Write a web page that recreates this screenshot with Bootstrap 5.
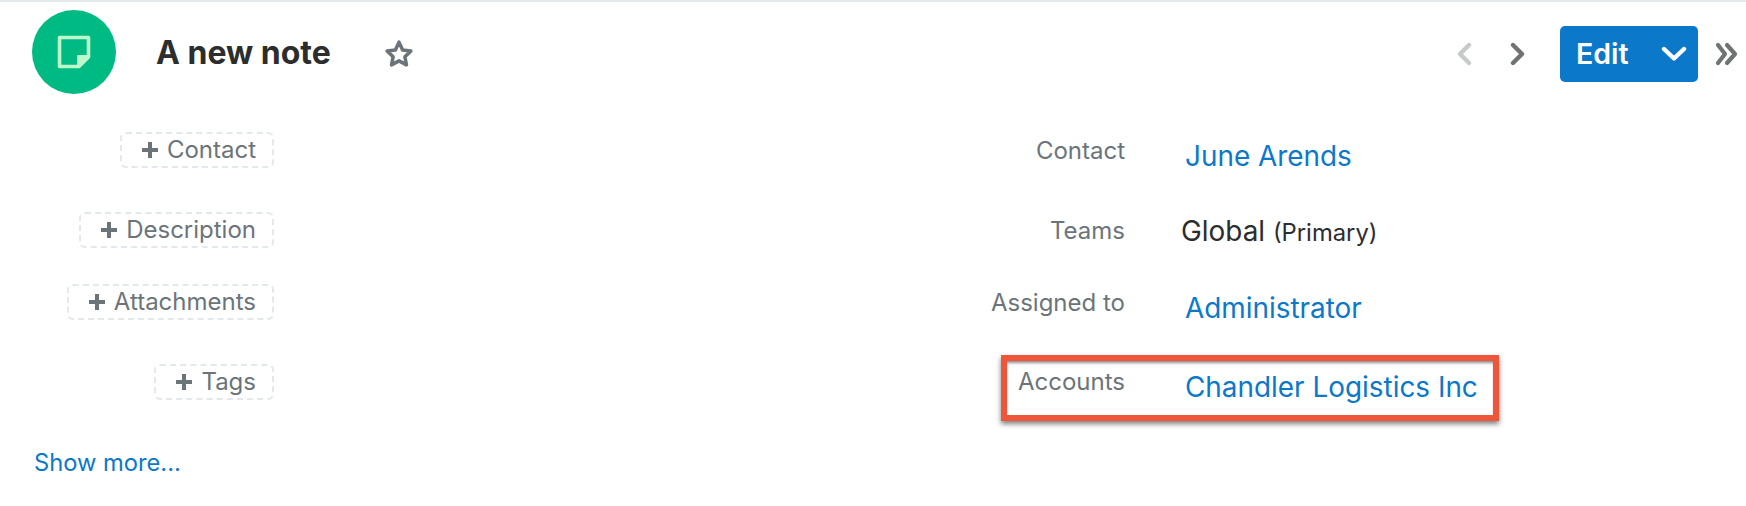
<!DOCTYPE html>
<html lang="en">
<head>
<meta charset="utf-8">
<title>A new note</title>
<link rel="stylesheet" href="https://cdn.jsdelivr.net/npm/bootstrap@5.3.0/dist/css/bootstrap.min.css">
<style>
html,body{height:100%;}
body{font-family:Inter,"Liberation Sans",sans-serif;background:#fff;color:#2b2d2e;overflow:hidden;}
.top-rule{height:2px;background:#e5e9ec;}
.rec-head{height:102px;padding-left:32px;padding-right:8px;}
.rec-icon{width:84px;height:84px;background:#00ba83;margin-top:8px;}
.rec-titlebar{margin-top:34px;}
.rec-title{font-size:32px;font-weight:700;line-height:34px;margin:0 0 0 40px;color:#2b2d2e;}
.star-ic{margin-left:53px;}
.head-actions{padding-top:24px;}
.pager{gap:38px;margin-right:34px;}
.edit-group{width:138px;height:56px;background:#0c78c9;border-radius:5px;color:#fff;font-size:28.5px;font-weight:600;padding:0 11px 0 16px;margin-right:17px;border:0;}
.edit-group:hover{background:#0c78c9;color:#fff;}
.rec-body{position:relative;}
.add-col{width:274px;}
.add-pill{height:36px;border:2px dashed #e3e8ec;border-radius:6px;background:#fff;color:#6b7479;font-size:24px;line-height:1;padding:0 16px 0 20px;gap:9px;}
.pill-a{margin-top:28px;}
.pill-b{margin-top:44px;}
.pill-c{margin-top:36px;}
.more-link{color:#0c78c9;text-decoration:none;font-size:23.7px;line-height:28px;margin:49px 0 0 34px;display:block;}
.fields{margin-left:581px;padding-top:33px;}
.field-row{display:flex;position:relative;}
.field-label{width:270px;text-align:right;color:#6b7479;font-size:24px;line-height:28px;}
.field-value{margin-left:60px;font-size:27.9px;line-height:32px;padding-top:3px;white-space:nowrap;}
.field-value a{color:#0c78c9;text-decoration:none;}
.row-h1{height:80px;}
.row-h2{height:72px;}
.row-h3{height:79px;}
.row-h4{height:64px;}
.plain-val{margin-left:56px;padding-top:0;line-height:28px;}
.minor{font-size:23.8px;}
.callout{position:absolute;left:146px;top:-13px;width:498px;height:66px;border:6px solid #ee5539;box-shadow:0 3px 5px rgba(0,0,0,.5),inset 0 3px 3px -1px rgba(0,0,0,.45);pointer-events:none;}
</style>
</head>
<body>
<div class="top-rule"></div>
<header class="rec-head d-flex align-items-start">
  <div class="rec-icon rounded-circle d-flex align-items-center justify-content-center flex-shrink-0">
    <svg width="34" height="34" viewBox="0 0 34 34" aria-hidden="true"><path d="M2.5 2.5H31.5V22L22 31.5H2.5Z" fill="none" stroke="#bdf8cd" stroke-width="3.6" stroke-linejoin="round"/><path d="M21 31V21H31Z" fill="#bdf8cd" stroke="#bdf8cd" stroke-width="2" stroke-linejoin="round"/></svg>
  </div>
  <div class="d-flex align-items-center rec-titlebar">
    <h1 class="rec-title">A new note</h1>
    <svg class="star-ic" width="30" height="29" viewBox="0 0 29 28" aria-hidden="true"><path d="M14.5 3L18 10.6L26 11.6L20.2 17.2L21.7 25L14.5 21.1L7.3 25L8.8 17.2L3 11.6L11 10.6Z" fill="none" stroke="#6b7479" stroke-width="3.4" stroke-linejoin="round"/></svg>
  </div>
  <div class="ms-auto d-flex align-items-center head-actions">
    <div class="d-flex align-items-center pager">
      <svg width="16" height="24" viewBox="0 0 16 24" aria-hidden="true"><path d="M13 3L4 12L13 21" fill="none" stroke="#c6cacb" stroke-width="4.4" stroke-linecap="round" stroke-linejoin="round"/></svg>
      <svg width="16" height="24" viewBox="0 0 16 24" aria-hidden="true"><path d="M3 3L12 12L3 21" fill="none" stroke="#6f7374" stroke-width="4.4" stroke-linecap="round" stroke-linejoin="round"/></svg>
    </div>
    <button type="button" class="btn edit-group d-flex align-items-center justify-content-between">
      <span>Edit</span>
      <svg width="26" height="16" viewBox="0 0 26 16" aria-hidden="true"><path d="M3 3L13 12.5L23 3" fill="none" stroke="#fff" stroke-width="4.4" stroke-linecap="round" stroke-linejoin="round"/></svg>
    </button>
    <svg width="23" height="24" viewBox="0 0 23 24" aria-hidden="true"><path d="M3 3L10 12L3 21M12 3L20 12L12 21" fill="none" stroke="#6f7374" stroke-width="4.2" stroke-linecap="round" stroke-linejoin="round"/></svg>
  </div>
</header>
<main class="rec-body d-flex">
  <div class="add-col flex-shrink-0">
    <div class="d-flex flex-column align-items-end">
      <button type="button" class="btn add-pill pill-a d-flex align-items-center"><svg width="16" height="16" viewBox="0 0 16 16" aria-hidden="true"><path d="M8 0V16M0 8H16" stroke="#6b7479" stroke-width="4"/></svg><span>Contact</span></button>
      <button type="button" class="btn add-pill pill-b d-flex align-items-center"><svg width="16" height="16" viewBox="0 0 16 16" aria-hidden="true"><path d="M8 0V16M0 8H16" stroke="#6b7479" stroke-width="4"/></svg><span>Description</span></button>
      <button type="button" class="btn add-pill pill-c d-flex align-items-center"><svg width="16" height="16" viewBox="0 0 16 16" aria-hidden="true"><path d="M8 0V16M0 8H16" stroke="#6b7479" stroke-width="4"/></svg><span>Attachments</span></button>
      <button type="button" class="btn add-pill pill-b d-flex align-items-center"><svg width="16" height="16" viewBox="0 0 16 16" aria-hidden="true"><path d="M8 0V16M0 8H16" stroke="#6b7479" stroke-width="4"/></svg><span>Tags</span></button>
    </div>
    <a class="more-link" href="#">Show more...</a>
  </div>
  <div class="fields flex-grow-1">
    <div class="field-row row-h1"><div class="field-label">Contact</div><div class="field-value"><a href="#">June Arends</a></div></div>
    <div class="field-row row-h2"><div class="field-label">Teams</div><div class="field-value plain-val">Global <span class="minor">(Primary)</span></div></div>
    <div class="field-row row-h3"><div class="field-label">Assigned to</div><div class="field-value"><a href="#">Administrator</a></div></div>
    <div class="field-row row-h4"><div class="field-label">Accounts</div><div class="field-value"><a href="#">Chandler Logistics Inc</a></div><div class="callout"></div></div>
  </div>
</main>
<script src="https://cdn.jsdelivr.net/npm/bootstrap@5.3.0/dist/js/bootstrap.bundle.min.js"></script>
</body>
</html>
